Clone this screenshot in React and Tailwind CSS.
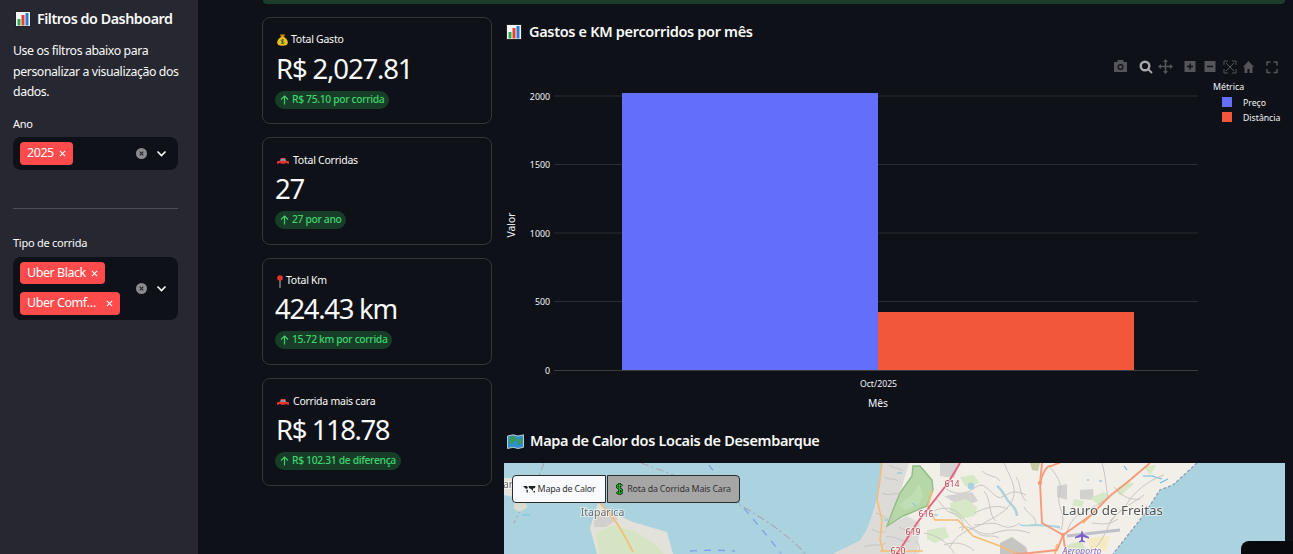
const font = { fontFamily: '"Noto Sans", sans-serif' };

function ChartEmoji({ size = 16 }) {
  return (
    <svg width={size} height={size} viewBox="0 0 16 16" className="shrink-0">
      <rect x="0.5" y="0.5" width="15" height="15" fill="#f4f6f7" stroke="#222" strokeWidth="1" />
      <rect x="2.500" y="8" width="3" height="6.500" fill="#2fa84f" />
      <rect x="6.500" y="4" width="3" height="10.500" fill="#e8402c" />
      <rect x="10.500" y="2" width="3" height="12.500" fill="#2b7bd6" />
    </svg>
  );
}
function BagEmoji() {
  return (
    <svg width="11" height="12" viewBox="0 0 11 12" className="shrink-0">
      <path d="M3 0.500h5l-1 2.500h-3z" fill="#d98b00" />
      <path d="M4 3h3c2.500 1.500 3.800 3.500 3.800 5.500 0 2.200-1.500 3.200-5.300 3.200S.2 10.700.2 8.500C.2 6.500 1.500 4.500 4 3z" fill="#f5b91e" />
      <path d="M5.500 5v5M7 6.200c-1-.7-3-.5-3 .6s3 .7 3 1.800-2 1.200-3 .6" stroke="#17701f" strokeWidth="0.9" fill="none" />
    </svg>
  );
}
function CarEmoji() {
  return (
    <svg width="12" height="7" viewBox="0 0 12 7" className="shrink-0">
      <path d="M0 5.800V3.300L2.800 2.700 3.800 0h4.400l1.100 2.700L12 3.300v2.500z" fill="#e2352c" />
      <path d="M4.300 .7h1.400v2H3.500zM6.300 .7h1.500l.8 2H6.300z" fill="#55c3e4" />
      <rect x="1.600" y="5" width="2.400" height="2" rx="1" fill="#15151e" />
      <rect x="8" y="5" width="2.400" height="2" rx="1" fill="#15151e" />
    </svg>
  );
}
function PinEmoji() {
  return (
    <svg width="6" height="13" viewBox="0 0 6 13" className="shrink-0">
      <rect x="2.500" y="4" width="1" height="9" fill="#b9b9b9" />
      <circle cx="3" cy="3" r="2.800" fill="#e8322c" />
    </svg>
  );
}
function MapEmoji() {
  return (
    <svg width="17" height="15" viewBox="0 0 17 15" className="shrink-0">
      <path d="M0.500 2 6 .8l5 1.200L16.500 .8v12.500L11 14.500l-5-1.200-5.500 1.200z" fill="#2f8fc9" stroke="#dfe8ec" strokeWidth="0.8" />
      <path d="M3 3l3-1 3 2-1 3-2 1-1 3-2-3zM10 6l4-2 1 4-3 3z" fill="#3c9b45" />
    </svg>
  );
}
function WorldEmoji() {
  return (
    <svg width="13" height="8" viewBox="0 0 13 8" className="shrink-0">
      <path d="M0 1h4l1 2-2 1-1-1zM5.500 1h7L12 3l-2 .5V6L8 4 6 3zM3.500 4.500 5 5l-.5 3L3.500 7zM10.500 6H12v1.500h-1.500z" fill="#222" />
    </svg>
  );
}
function DollarEmoji() {
  return (
    <svg width="7" height="12" viewBox="0 0 7 12" className="shrink-0">
      <path d="M3.500 0v12M6.200 3C5 1.500 1 1.500 1 3.500S6.200 5.500 6.200 8.300 2 10.800.8 9" stroke="#111" strokeWidth="2.600" fill="none" />
      <path d="M3.500 0.500v11M6.200 3C5 1.500 1 1.500 1 3.500S6.200 5.500 6.200 8.300 2 10.800.8 9" stroke="#1fb52a" strokeWidth="1.200" fill="none" />
    </svg>
  );
}

function X({ size = 7, color = "#fff" }) {
  return (
    <svg width={size} height={size} viewBox="0 0 8 8" className="shrink-0">
      <path d="M1 1l6 6M7 1 1 7" stroke={color} strokeWidth="1.200" />
    </svg>
  );
}

function Tag({ label, w, h }) {
  return (
    <div className={`flex items-center justify-between whitespace-nowrap rounded bg-[#ff4b4b] pl-[7px] pr-[7px] text-[12.500px] tracking-[-0.45px] text-white ${w} ${h}`}>
      <span>{label}</span>
      <X />
    </div>
  );
}

function SelectControls() {
  return (
    <div className="flex shrink-0 items-center gap-[9px]">
      <svg width="11" height="11" viewBox="0 0 11 11">
        <circle cx="5.500" cy="5.500" r="5.500" fill="#8b8c90" />
        <path d="M3.700 3.700l3.600 3.600M7.300 3.700 3.700 7.300" stroke="#26272e" strokeWidth="1.200" />
      </svg>
      <svg width="11" height="11" viewBox="0 0 11 11">
        <path d="M1.500 3.500l4 4 4-4" stroke="#fff" strokeWidth="1.600" fill="none" />
      </svg>
    </div>
  );
}

function Sidebar() {
  return (
    <aside className="flex h-full w-[198px] shrink-0 flex-col bg-[#262730] pl-[13px] pr-[20px] text-[#fafafa]">
      <div className="mt-[8px] flex h-[21px] items-center gap-[6px] whitespace-nowrap pl-[2px] text-[14.300px] font-semibold tracking-[-0.45px]">
        <ChartEmoji />
        <span>Filtros do Dashboard</span>
      </div>
      <p className="-mr-[4px] mt-[12px] text-[12.300px] leading-[20.500px] tracking-[-0.4px]">
        Use os filtros abaixo para personalizar a visualização dos dados.
      </p>
      <label className="mt-[13px] text-[11px] leading-[16px] tracking-[-0.25px]">Ano</label>
      <div className="mt-[5px] flex h-[33px] items-center justify-between rounded-lg bg-[#0e1117] pl-[7px] pr-[11px]">
        <Tag label="2025" w="w-[53px]" h="h-[23px]" />
        <SelectControls />
      </div>
      <hr className="mt-[38px] border-t border-[#4c4d55]" />
      <label className="mt-[26px] text-[11px] leading-[16px] tracking-[-0.25px]">Tipo de corrida</label>
      <div className="mt-[6px] flex h-[63px] items-center justify-between rounded-lg bg-[#0e1117] pl-[7px] pr-[11px]">
        <div className="flex flex-col gap-[8px]">
          <Tag label="Uber Black" w="w-[85px]" h="h-[22px] pt-[1px]" />
          <Tag label="Uber Comf…" w="w-[100px]" h="h-[23px] pt-[1px]" />
        </div>
        <SelectControls />
      </div>
    </aside>
  );
}

function Metric({ icon, label, value, delta, pill, h, gap, vm }) {
  return (
    <div className={`flex flex-col rounded-lg border border-[#34363c] bg-[#0e1117] pl-[12px] text-[#fafafa] ${h}`}>
      <div className={`flex h-[16px] items-center whitespace-nowrap pl-[2px] text-[10.500px] tracking-[-0.25px] ${gap}`}>
        {icon}
        <span>{label}</span>
      </div>
      <div className={`h-[40px] whitespace-nowrap text-[27.500px] leading-[40px] ${vm}`}>{value}</div>
      <div className={`mt-[2px] flex h-[18px] items-center gap-[3px] whitespace-nowrap rounded-full bg-[#173d28] pl-[5px] text-[10.300px] font-medium tracking-[-0.33px] text-[#3dd56d] ${pill}`}>
        <svg width="9" height="10" viewBox="0 0 9 10" className="shrink-0">
          <path d="M4.500 9.500V1M1 4.500 4.500 1 8 4.500" stroke="#3dd56d" strokeWidth="1.100" fill="none" />
        </svg>
        <span>{delta}</span>
      </div>
    </div>
  );
}

function Tools() {
  const d = "#53555b";
  return (
    <g>
      <path d="M1114 62h3l1-2h5l1 2h3v10h-13z" fill={d} />
      <circle cx="1120.500" cy="67" r="3" fill="#0e1117" />
      <circle cx="1120.500" cy="67" r="1.800" fill={d} />
      <circle cx="1145" cy="66" r="4.300" fill="none" stroke="#a9aaad" strokeWidth="2.400" />
      <path d="M1148 69l4 4" stroke="#a9aaad" strokeWidth="1.800" />
      <path d="M1165.500 60v13M1159 66.500h13" stroke={d} strokeWidth="1.600" />
      <path d="M1165.500 59l-2.500 3h5zM1165.500 74l-2.500-3h5zM1158 66.500l3-2.500v5zM1173 66.500l-3-2.500v5z" fill={d} />
      <rect x="1184.500" y="61" width="11" height="11" fill={d} />
      <path d="M1187 66.500h6M1190 63.500v6" stroke="#0e1117" strokeWidth="1.500" />
      <rect x="1204.500" y="61" width="11" height="11" fill={d} />
      <path d="M1207 66.500h6" stroke="#0e1117" strokeWidth="1.500" />
      <path d="M1224 65v-4h4M1232 61h4v4M1236 69v4h-4M1228 73h-4v-4M1226 63l8 8M1234 63l-8 8" stroke={d} strokeWidth="1" fill="none" />
      <path d="M1243 67l5.500-6 5.500 6h-1.500v6h-3v-4h-2v4h-3v-6z" fill={d} />
      <path d="M1267 65.500V62h3.500M1273.500 62h3.500v3.500M1277 69v3.500h-3.500M1270.500 72.500H1267V69" stroke={d} strokeWidth="1.500" fill="none" />
    </g>
  );
}

function Chart() {
  const grid = [
    [96, "2000"],
    [164.500, "1500"],
    [233, "1000"],
    [301.500, "500"],
  ];
  return (
    <svg width="781" height="375" viewBox="504 46 781 375" className="block" style={{ fontFamily: '"Noto Sans", sans-serif' }}>
      <Tools />
      {grid.map(([y, t]) => (
        <g key={t}>
          <line x1="554" x2="1198" y1={y} y2={y} stroke="#2a2d33" />
          <text x="550" y={y + 3.500} textAnchor="end" fontSize="8.800" fill="#f2f5fa">{t}</text>
        </g>
      ))}
      <text x="550" y="373.500" textAnchor="end" fontSize="8.800" fill="#f2f5fa">0</text>
      <rect x="622" y="93" width="256" height="277" fill="#636efa" />
      <rect x="878" y="312" width="256" height="58" fill="#f2573c" />
      <line x1="554" x2="1198" y1="370.500" y2="370.500" stroke="#3a3c42" />
      <text x="878.500" y="387" textAnchor="middle" fontSize="8.700" fill="#f2f5fa">Oct/2025</text>
      <text x="878" y="407" textAnchor="middle" fontSize="10.300" fill="#f2f5fa">Mês</text>
      <text x="515" y="225" textAnchor="middle" fontSize="10.300" fill="#f2f5fa" transform="rotate(-90 515 225)">Valor</text>
      <text x="1213" y="90" fontSize="8.800" fill="#f2f5fa">Métrica</text>
      <rect x="1222" y="97" width="10" height="10" fill="#636efa" />
      <text x="1243" y="106" fontSize="8.700" fill="#f2f5fa">Preço</text>
      <rect x="1222" y="112" width="10" height="10" fill="#f2573c" />
      <text x="1243" y="121" fontSize="8.700" fill="#f2f5fa">Distância</text>
    </svg>
  );
}

function MapArt() {
  const g = "#c4c2bd";
  return (
    <svg width="781" height="91" viewBox="0 0 781 91" className="block blur-[0.4px]" style={{ fontFamily: '"Noto Sans", sans-serif' }}>
      <rect width="781" height="91" fill="#aad3df" />
      {/* maritime lines */}
      <path d="M40 0c-5 15-20 40-30 60M137 0c60 22 120 45 165 91" stroke="#a9a6b8" strokeWidth="1.100" strokeDasharray="8 3 2 3" fill="none" />
      <path d="M205 2c14 20 50 60 72 88" stroke="#7f9fe8" strokeWidth="1.300" strokeDasharray="7 7" fill="none" />
      <path d="M186 88c15-1 30-1 45 0" stroke="#7f9fe8" strokeWidth="1.300" strokeDasharray="7 7" fill="none" />
      {/* left fragments */}
      <path d="M0 15h8l6 12-4 7-10-2z" fill="#e6e3dc" />
      <path d="M10 40l10-2 4 6-8 5-6-3z" fill="#d9dccf" />
      <path d="M12 30l4-1M18 52h8M8 38h6" stroke="#7ec4de" strokeWidth="1" />
      {/* Itaparica */}
      <path d="M94 40l12 9 23 10 34 10 6 22H93l-7-26z" fill="#e3e2da" />
      <path d="M92 70l16-8 22 6 22 14 8 9H95z" fill="#d5e5c3" />
      <path d="M90 50l14-4 10 10-12 8-12 0z" fill="#d2d0cc" />
      <path d="M96 40l13 15c8 10 14 22 20 34" stroke="#f8bb72" strokeWidth="1.700" fill="none" />
      {/* mainland */}
      <path d="M378 0h315l-24 22-13 5-17 26-30 38H329l27-13 7-11 6-17 4-13 3-17z" fill="#f2efe9" />
      <path d="M693 0l-24 22-13 5-17 26-30 38" stroke="#8d9bb5" strokeWidth="1.300" strokeDasharray="3 2" fill="none" />
      {/* urban west */}
      <path d="M378 0h27l-9 30-13 33 20-10 13 7-3 31h-84l27-13 7-11 6-17 4-13 3-17z" fill="#dddbd7" />
      <path d="M436 0h20l-6 15-14-2zM440 33l28-4 6 9-16 6z" fill="#d5d3cf" />
      <path d="M496 80l12-6 14 10 2 7h-28z" fill="#c6c5c1" />
      <path d="M553 23l10-2v16l-10-3zM576 27l13-1 1 11-14-1z" fill="#d3d1cd" />
      <path d="M526 0h10l-2 8-6-1z" fill="#c8cca6" />
      {/* forest */}
      <path d="M409 3l7 0 12 14 1 10-6 16-24 10-16 10 6-16 7-17 12-17z" fill="#b6d8a8" stroke="#8fbc85" strokeWidth="1.400" />
      <path d="M395 42l12-9 8-12 4 12-4 8-14 6z" fill="#c0deb4" />
      {/* parks */}
      <path d="M446 40l16-4 11 8-2 9-16 3-9-7zM423 67l18-3 4 10-14 6-8-4zM456 14l14-2 5 8-14 3zM570 36l10 2-2 6-9-2zM586 35l14-6 6 4-10 10zM612 26l12-8 6 3-14 12zM640 4l12-2-6 10z" fill="#d7e8c6" />
      <path d="M584 75l22-2-4 15-16 0z" fill="#f5ebc2" />
      <path d="M563 82l14-4 8 13h-20z" fill="#d5e5c0" />
      {/* water */}
      <circle cx="467" cy="23" r="3.500" fill="#aad3df" />
      <path d="M493 23c6 4 8 12 12 16s8 8 8 14" stroke="#aad3df" strokeWidth="2.400" fill="none" />
      <path d="M516 62c10 2 28-2 40 3M526 62c12-1 22 1 30 2" stroke="#aad3df" strokeWidth="1.600" fill="none" />
      <path d="M639 13h9l10 3M595 18h3M583 17h2M620 3l3 4M656 20l8-4" stroke="#6fb9dc" strokeWidth="1.100" fill="none" />
      <path d="M393 10h5M408 40l4 3M430 52h4M380 57h4" stroke="#7ec4de" strokeWidth="1" />
      {/* minor roads */}
      <g stroke={g} strokeWidth="0.900" fill="none">
        <path d="M500 0c6 14 14 26 8 38s-18 16-28 22-26 8-34 24" />
        <path d="M545 3c8 10 14 16 10 30-2 12 8 18 2 34" />
        <path d="M598 0c4 14 4 26 6 34-8 8-20 12-30 18-8 6-10 14-12 20" />
        <path d="M430 48c12-6 22-2 30 8s18 18 30 14 24-4 36 0" />
        <path d="M442 26c10 6 20 6 30-2s18 14 26 10 12-8 24-2" />
        <path d="M420 70c14 2 24 10 30 20M470 50c10-4 22-10 34-4M480 28c8 10 4 24 12 30" />
        <path d="M640 32c-10 8-26 14-34 28-4 8-8 18-14 24M660 12c-12 4-24 12-34 24-4 8-14 16-20 22" />
        <path d="M610 24c6 8 16 14 26 12M588 60c8 0 14 4 26-4" />
        <path d="M378 30c8 4 14-2 20 2M372 50c8 2 10 8 18 6M382 74c10-2 14 6 24 4M368 66c6 4 10 4 14 2" />
        <path d="M385 2c4 4 10 2 14 6M380 14c6 4 10 0 14 4M360 84c8-4 16 0 22-4M395 64c6 4 12 4 18 2M412 78c4 4 4 8 2 12" />
        <path d="M432 36c6 4 8 12 16 14s14 10 10 18M455 65c8-4 14 2 20 6s14 0 20 4M440 82c10-4 22-2 30 6" />
        <path d="M470 62c10 0 18-4 26 0s14 2 20-2M478 8c6 6 14 4 18 10M512 14c6 8 2 16 10 24M520 44c4 8 12 8 12 18" />
      </g>
      <path d="M563 73l53-6" stroke="#bfbfca" strokeWidth="3" />
      <path d="M578 68c.8 0 1 1.500 1 3l6 3v1.500l-6-1.500v3l2 1.500v1l-3-.8-3 .8v-1l2-1.500v-3l-6 1.500V74l6-3c0-1.500.2-3 1-3z" fill="#7b5fc9" />
      {/* orange roads */}
      <g stroke="#f8bb72" strokeWidth="1.500" fill="none">
        <path d="M378 0l-2 17-3 20 5 20-2 20 3 11" />
        <path d="M428 27l-4 16 7 14h23l15 16 27 10 17 8" />
        <path d="M376 88h43" />
        <path d="M553 81l-2 10" strokeWidth="1.800" />
        <path d="M586 53l-7 7" strokeWidth="1.800" />
      </g>
      {/* trunk */}
      <path d="M456 0l-12 20-18 23-13 17-14 22-6 9" stroke="#e4617f" strokeWidth="1.900" fill="none" />
      <g stroke="#f79a7c" strokeWidth="1.900" fill="none">
        <path d="M538 0l-2 20 2 40 21 12 27-19 20-20 20-16 20-17" />
        <path d="M536 20c2-8 6-17 10-17s6-3 10-3" />
        <path d="M559 72l-6 15-27 3-17 1" />
        <path d="M559 72l3 19" />
      </g>
      <circle cx="559" cy="72" r="2" fill="#f79a7c" />
      <circle cx="536" cy="20" r="2.200" fill="#f79a7c" />
      {/* labels */}
      <g textAnchor="middle" stroke="#ffffff" strokeOpacity="0.55" strokeWidth="2" paintOrder="stroke">
        <text x="98.500" y="53" fontSize="10.500" fill="#6d6d6d">Itaparica</text>
        <text x="608.500" y="52" fontSize="13.400" fill="#555">Lauro de Freitas</text>
        <text x="578" y="91" fontSize="8.800" fontStyle="italic" fill="#8366c9">Aeroporto</text>
        <text x="448" y="24" fontSize="8.800" fill="#b9404f">614</text>
        <text x="422" y="54" fontSize="8.800" fill="#b9404f">616</text>
        <text x="409" y="72" fontSize="8.800" fill="#b9404f">619</text>
        <text x="394" y="91" fontSize="8.800" fill="#b9404f">620</text>
        <text x="4" y="25" fontSize="10" fill="#6d6d6d">ar</text>
      </g>
    </svg>
  );
}

function MapButton({ active, children, w }) {
  return (
    <div className={`flex h-[28px] items-center justify-center gap-[2px] whitespace-nowrap border border-[#2b2b2b] text-[8.900px] tracking-[-0.2px] text-[#333] ${w} ${active ? "rounded-l bg-[#f8fafe]" : "rounded-r bg-[#a6a6a6]"}`}>
      {children}
    </div>
  );
}

function Heading({ icon, children, className = "" }) {
  return (
    <h2 className={`flex h-[20px] items-center whitespace-nowrap text-[14.500px] font-semibold tracking-[-0.33px] text-[#fafafa] ${className}`}>
      {icon}
      <span>{children}</span>
    </h2>
  );
}

export default function App() {
  return (
    <div className="relative flex h-[554px] w-full overflow-hidden bg-[#0e1117]" style={font}>
      <Sidebar />
      <main className="flex min-w-0 flex-1 flex-col pl-[64px] pr-[8px]">
        <div className="ml-[1px] h-[4px] shrink-0 rounded-b bg-[#1d3d2b]" />
        <div className="mt-[13px] flex gap-[12px]">
          <div className="flex w-[230px] shrink-0 flex-col gap-[13px]">
            <Metric h="h-[107px] pt-[14px]" vm="mt-[1px]" icon={<BagEmoji />} gap="gap-[3px]" label="Total Gasto" value={<span className="ml-[1px] tracking-[-1.15px]">R$ 2,027.81</span>} delta="R$ 75.10 por corrida" pill="w-[114px]" />
            <Metric h="h-[108px] pt-[15px]" vm="" icon={<CarEmoji />} gap="gap-[4px]" label="Total Corridas" value={<span className="tracking-[-1.15px]">27</span>} delta="27 por ano" pill="w-[71px]" />
            <Metric h="h-[107px] pt-[14px]" vm="" icon={<PinEmoji />} gap="gap-[3px]" label="Total Km" value={<span className="tracking-[-1.3px]">424.43 km</span>} delta="15.72 km por corrida" pill="w-[117px]" />
            <Metric h="h-[108px] pt-[15px]" vm="" icon={<CarEmoji />} gap="gap-[4px]" label="Corrida mais cara" value={<span className="ml-[1px] tracking-[-1.45px]">R$ 118.78</span>} delta="R$ 102.31 de diferença" pill="w-[126px]" />
          </div>
          <div className="min-w-0 flex-1">
            <div className="mt-[5px]">
              <Heading icon={<ChartEmoji />} className="gap-[7px] pl-[2px]">Gastos e KM percorridos por mês</Heading>
            </div>
            <div className="mt-[4px]">
              <Chart />
            </div>
            <div className="mt-[10px]">
              <Heading icon={<MapEmoji />} className="gap-[6px] pl-[3px]">Mapa de Calor dos Locais de Desembarque</Heading>
            </div>
            <div className="relative mt-[12px] h-[91px] overflow-hidden bg-[#aad3df]">
              <MapArt />
              <div className="absolute left-[8px] top-[12px] flex gap-[1px]">
                <MapButton active w="w-[94px]"><WorldEmoji /> Mapa de Calor</MapButton>
                <MapButton w="w-[133px]"><span className="mr-[2px]"><DollarEmoji /></span> Rota da Corrida Mais Cara</MapButton>
              </div>
            </div>
          </div>
        </div>
      </main>
      <div className="absolute bottom-0 right-0 h-[13px] w-[52px] rounded-tl-lg bg-[#08090c]" />
    </div>
  );
}
